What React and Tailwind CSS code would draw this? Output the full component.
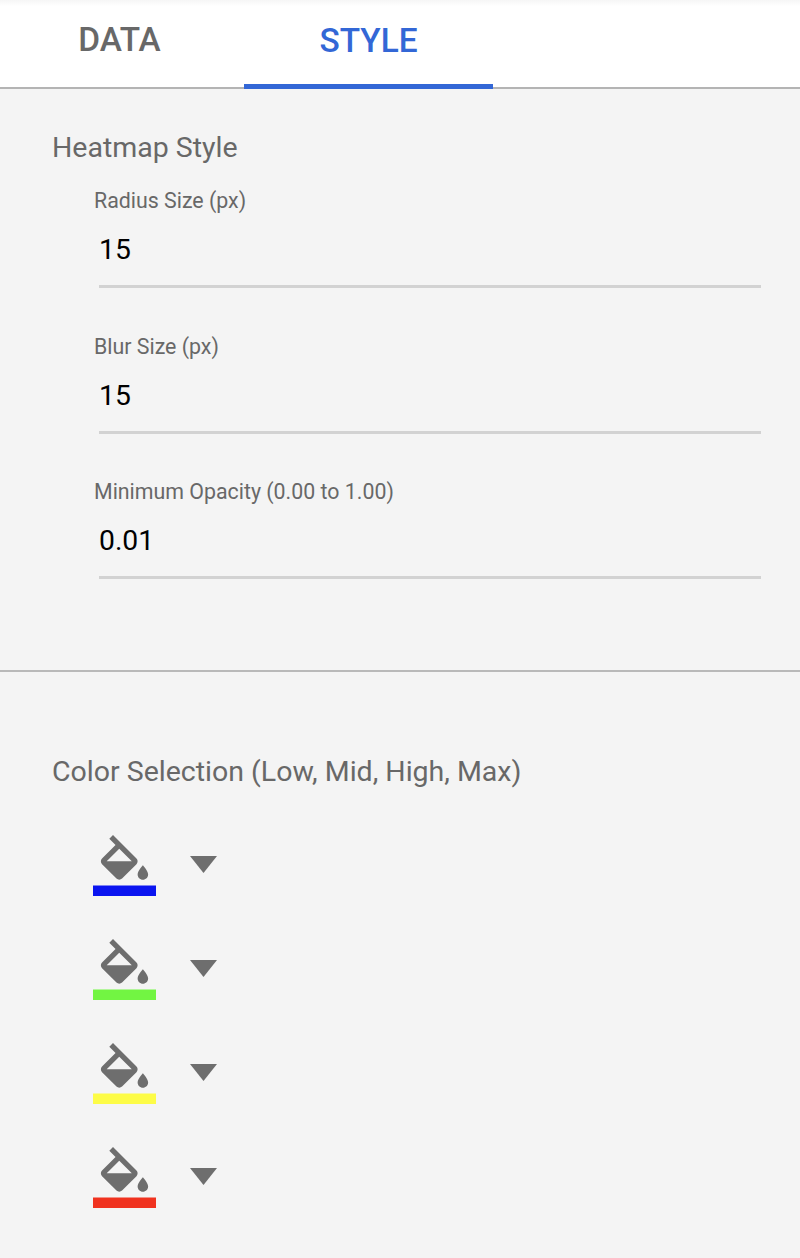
import React from 'react';

const fields = [
  { label: 'Radius Size (px)', value: '15' },
  { label: 'Blur Size (px)', value: '15' },
  { label: 'Minimum Opacity (0.00 to 1.00)', value: '0.01' },
];

const swatches = ['#0a14f0', '#72f542', '#fdfc47', '#f0321f'];

const FillIcon = ({ color }) => (
  <svg viewBox="0 0 24 24" className="w-[63px] h-[63px] block">
    <path
      fill="#6e6e6e"
      transform="translate(0 0.8)"
      d="M16.56 8.94L7.62 0 6.21 1.41l2.38 2.38-5.15 5.15c-.59.59-.59 1.54 0 2.12l5.5 5.5c.29.29.68.44 1.06.44s.77-.15 1.06-.44l5.5-5.5c.59-.58.59-1.53 0-2.12zM5.21 10L10 5.21 14.79 10H5.21zM19 11.5s-2 2.17-2 3.5c0 1.1.9 2 2 2s2-.9 2-2c0-1.33-2-3.5-2-3.5z"
    />
    <path fill={color} d="M0 20h24v4H0z" />
  </svg>
);

const App = () => {
  return (
    <div className="w-[800px] h-[1258px] bg-[#f4f4f4] overflow-hidden font-['Roboto',sans-serif]">
      <div className="flex h-[89px] bg-white border-b-2 border-[#b4b4b4] bg-gradient-to-b from-[#f6f6f6] to-white to-[6px]">
        <div className="w-[244px] h-[87px] pb-[6px] pr-[5px] flex items-center justify-center text-[33.4px] font-medium text-[#686868]">
          DATA
        </div>
        <div className="w-[249px] h-[89px] pb-[2px] flex items-center justify-center text-[33.4px] font-medium text-[#3367d6] border-b-[5px] border-[#3367d6]">
          STYLE
        </div>
      </div>

      <div className="h-[583px] border-b-2 border-[#b9b9b9] pt-[42px]">
        <h2 className="pl-[52px] text-[28.5px] leading-[34px] text-[#686868]">Heatmap Style</h2>
        <div className="mt-[22px] flex flex-col gap-[44.5px]">
          {fields.map(f => (
            <div key={f.label} className="pl-[94px]">
              <label className="block text-[21.35px] leading-[28px] text-[#686868]">{f.label}</label>
              <div className="ml-[5px] mr-[39px] mt-[15px] h-[58px] pt-[3px] border-b-[3px] border-[#d2d2d2] text-[28.3px] leading-[34px] text-black">
                {f.value}
              </div>
            </div>
          ))}
        </div>
      </div>

      <h2 className="pl-[52px] mt-[83px] text-[28.5px] leading-[34px] text-[#686868]">
        Color Selection (Low, Mid, High, Max)
      </h2>
      <div className="mt-[44px] pl-[93px] flex flex-col gap-[41px]">
        {swatches.map(c => (
          <div key={c} className="flex items-center">
            <FillIcon color={c} />
            <svg viewBox="7 10 10 5" className="ml-[34px] w-[27px] h-[17px]" preserveAspectRatio="none">
              <path fill="#6e6e6e" d="M7 10l5 5 5-5z" />
            </svg>
          </div>
        ))}
      </div>
    </div>
  );
};

export default App;
